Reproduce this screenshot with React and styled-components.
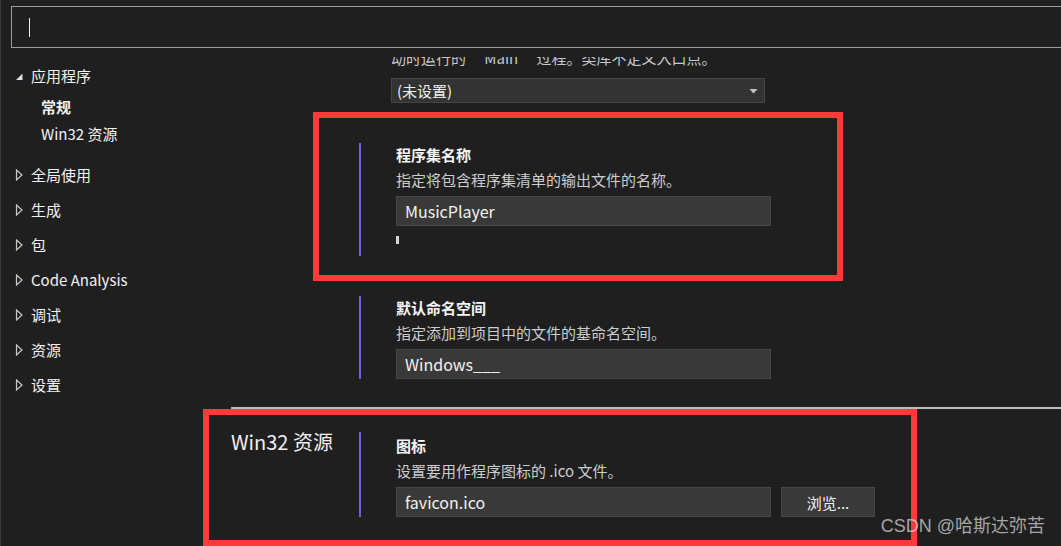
import React from "react";
import styled, { createGlobalStyle } from "styled-components";

const GlobalStyle = createGlobalStyle`
  html, body {
    margin: 0;
    padding: 0;
    background: #1f1f1f;
    overflow: hidden;
  }
  body {
    font-family: "Noto Sans CJK SC", "Noto Sans", sans-serif;
    color: #f0f0f0;
  }
`;

const Page = styled.div`
  position: relative;
  height: 546px;
  overflow: hidden;
  border-left: 1px solid #3a3a3a;
  background: #1f1f1f;
`;

const SearchBar = styled.div`
  height: 49px;
  box-sizing: border-box;
  padding: 6px 0 0 10px;
`;

const SearchBox = styled.div`
  width: calc(100% + 40px);
  height: 42px;
  box-sizing: border-box;
  border: 1px solid #9c9c9c;
  display: flex;
  align-items: center;
  padding-left: 17px;
`;

const Caret = styled.span`
  width: 1px;
  height: 19px;
  background: #f0f0f0;
`;

const Body = styled.div`
  display: flex;
`;

const Sidebar = styled.nav`
  width: 230px;
  flex-shrink: 0;
  padding-top: 9px;
`;

const Group = styled.div`
  margin-bottom: 10px;
`;

const NavItem = styled.div`
  height: 35px;
  display: flex;
  align-items: center;
  padding-left: 14px;
  font-size: 15px;
  color: #f2f2f2;
  svg {
    width: 8px;
    height: 12px;
    margin-right: 8px;
  }
`;

const SubItem = styled.div`
  height: 27px;
  display: flex;
  align-items: center;
  padding-left: 40px;
  font-size: 15px;
  font-weight: ${(p) => (p.$active ? 700 : 400)};
  color: #f2f2f2;
`;

const Content = styled.main`
  flex: 1;
  min-width: 0;
`;

const TopArea = styled.div`
  padding-left: 160px;
`;

const Clip = styled.div`
  margin-top: 8px;
  height: 11px;
  overflow: hidden;
`;

const ClipText = styled.div`
  margin-top: -9px;
  line-height: 20px;
  font-size: 15px;
  color: #c8c8c8;
  white-space: nowrap;
`;

const Select = styled.div`
  margin-top: 10px;
  width: 374px;
  height: 25px;
  box-sizing: border-box;
  background: #333333;
  border: 1px solid #454545;
  display: flex;
  align-items: center;
  justify-content: space-between;
  padding: 0 6px 0 5px;
  font-size: 15px;
  color: #f0f0f0;
`;

const Section = styled.section`
  position: relative;
  display: flex;
  margin-top: ${(p) => p.$mt}px;
`;

const Label = styled.div`
  width: 128px;
  flex-shrink: 0;
  font-size: 20px;
  line-height: 20px;
  color: #f0f0f0;
`;

const Fields = styled.div`
  border-left: 2px solid #6e62e0;
  padding: ${(p) => p.$pt}px 0 ${(p) => p.$pb}px 35px;
  display: flex;
  flex-direction: column;
  align-items: flex-start;
`;

const Title = styled.div`
  font-size: 15px;
  line-height: 20px;
  font-weight: 700;
  color: #f5f5f5;
`;

const Desc = styled.div`
  margin-top: 5px;
  font-size: 15px;
  line-height: 20px;
  color: #cbcdd0;
`;

const InputRow = styled.div`
  margin-top: 6px;
  display: flex;
  gap: 10px;
`;

const TextBox = styled.div`
  width: 375px;
  height: 30px;
  box-sizing: border-box;
  background: #393939;
  border: 1px solid #474747;
  padding-left: 8px;
  font-size: 16px;
  line-height: 28px;
  color: #f2f2f2;
`;

const Button = styled.div`
  width: 94px;
  height: 30px;
  box-sizing: border-box;
  background: #393939;
  border: 1px solid #474747;
  display: flex;
  align-items: center;
  justify-content: center;
  font-size: 15px;
  color: #f2f2f2;
`;

const BlockCursor = styled.div`
  margin-top: 10px;
  width: 3px;
  height: 8px;
  background: #d6d6d6;
`;

const Divider = styled.div`
  margin-top: 28px;
  height: 2px;
  background: #bcbcbc;
`;

const Highlight = styled.div`
  position: absolute;
  box-sizing: border-box;
  border: 6px solid #fc3a3a;
  pointer-events: none;
  top: ${(p) => p.$top}px;
  left: ${(p) => p.$left}px;
  width: ${(p) => p.$w}px;
  height: ${(p) => p.$h}px;
`;

const Watermark = styled.div`
  position: absolute;
  right: 16px;
  bottom: 9px;
  font-family: "Liberation Sans", "Noto Sans CJK SC", sans-serif;
  font-size: 18px;
  line-height: 22px;
  color: rgba(205, 205, 205, 0.78);
  white-space: nowrap;
`;

function Arrow({ open }) {
  return open ? (
    <svg viewBox="0 0 8 12">
      <path d="M7.5 3.5 L7.5 10 L1 10 Z" fill="#e0e0e0" />
    </svg>
  ) : (
    <svg viewBox="0 0 8 12">
      <path d="M1.5 1 L7 6 L1.5 11 Z" fill="none" stroke="#c8c8c8" strokeWidth="1.2" />
    </svg>
  );
}

function DropArrow() {
  return (
    <svg width="9" height="6" viewBox="0 0 9 6">
      <path d="M0.5 1 L8.5 1 L4.5 5.5 Z" fill="#c4c4c4" />
    </svg>
  );
}

const navItems = ["全局使用", "生成", "包", "Code Analysis", "调试", "资源", "设置"];

export default function App() {
  return (
    <Page>
      <GlobalStyle />
      <SearchBar>
        <SearchBox>
          <Caret />
        </SearchBox>
      </SearchBar>
      <Body>
        <Sidebar>
          <Group>
            <NavItem>
              <Arrow open />
              应用程序
            </NavItem>
            <SubItem $active>常规</SubItem>
            <SubItem>Win32 资源</SubItem>
          </Group>
          {navItems.map((item) => (
            <NavItem key={item}>
              <Arrow />
              {item}
            </NavItem>
          ))}
        </Sidebar>

        <Content>
          <TopArea>
            <Clip>
              <ClipText>动时运行的 “Main” 过程。类库不定义入口点。</ClipText>
            </Clip>
            <Select>
              (未设置)
              <DropArrow />
            </Select>
          </TopArea>

          <Section $mt={40}>
            <Label />
            <Fields $pt={2} $pb={12}>
              <Title>程序集名称</Title>
              <Desc>指定将包含程序集清单的输出文件的名称。</Desc>
              <InputRow>
                <TextBox>MusicPlayer</TextBox>
              </InputRow>
              <BlockCursor />
            </Fields>
            <Highlight $top={-31} $left={82} $w={530} $h={169} />
          </Section>

          <Section $mt={40}>
            <Label />
            <Fields $pt={2} $pb={0}>
              <Title>默认命名空间</Title>
              <Desc>指定添加到项目中的文件的基命名空间。</Desc>
              <InputRow>
                <TextBox>Windows___</TextBox>
              </InputRow>
            </Fields>
          </Section>

          <Divider />

          <Section $mt={23}>
            <Label>Win32 资源</Label>
            <Fields $pt={4} $pb={0}>
              <Title>图标</Title>
              <Desc>设置要用作程序图标的 .ico 文件。</Desc>
              <InputRow>
                <TextBox>favicon.ico</TextBox>
                <Button>浏览...</Button>
              </InputRow>
            </Fields>
            <Highlight $top={-23} $left={-28} $w={714} $h={137} />
          </Section>
        </Content>
      </Body>
      <Watermark>CSDN @哈斯达弥苦</Watermark>
    </Page>
  );
}
